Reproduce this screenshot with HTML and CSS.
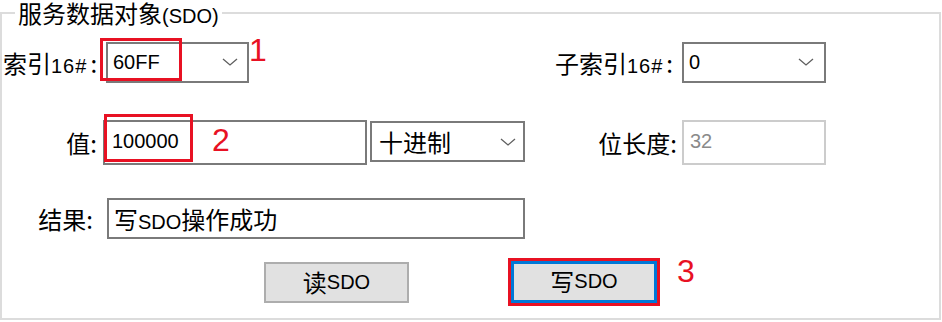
FILE: index.html
```html
<!DOCTYPE html>
<html lang="zh-CN">
<head>
<meta charset="utf-8">
<title>服务数据对象(SDO)</title>
<link rel="stylesheet" href="styles.css">
</head>
<body>
<fieldset class="group">
  <legend class="group-title">服务数据对象<span class="en">(SDO)</span></legend>

  <div class="row row-1">
    <span class="lbl lbl-index">索引<span class="en hex">16#</span><span class="colon">:</span></span>
    <div class="mark-wrap">
      <div class="combo combo-index">
        <span class="en">60FF</span>
        <svg class="chev" viewBox="0 0 16 8" width="16" height="8"><polyline points="1,1 8,7 15,1"/></svg>
      </div>
      <span class="mark mark-1"></span>
    </div>
    <span class="num num-1">1</span>
    <span class="lbl lbl-sub">子索引<span class="en hex">16#</span><span class="colon">:</span></span>
    <div class="combo combo-sub">
      <span class="en">0</span>
      <svg class="chev" viewBox="0 0 16 8" width="16" height="8"><polyline points="1,1 8,7 15,1"/></svg>
    </div>
  </div>

  <div class="row row-2">
    <span class="lbl lbl-val">值:</span>
    <div class="mark-wrap">
      <div class="textbox tb-val"><span class="en">100000</span></div>
      <span class="mark mark-2"></span>
      <span class="num num-2">2</span>
    </div>
    <div class="combo combo-dec">
      <span>十进制</span>
      <svg class="chev" viewBox="0 0 16 8" width="16" height="8"><polyline points="1,1 8,7 15,1"/></svg>
    </div>
    <span class="lbl lbl-bits">位长度:</span>
    <div class="textbox tb-bits disabled"><span class="en">32</span></div>
  </div>

  <div class="row row-3">
    <span class="lbl lbl-res">结果:</span>
    <div class="textbox tb-res"><span>写<span class="en">SDO</span>操作成功</span></div>
  </div>

  <div class="row row-4">
    <button class="btn btn-read" type="button">读<span class="en">SDO</span></button>
    <button class="btn btn-write" type="button">写<span class="en">SDO</span></button>
    <span class="num num-3">3</span>
  </div>
</fieldset>
</body>
</html>
```

FILE: styles.css
```css
* { box-sizing: border-box; }

html, body {
  margin: 0;
  padding: 0;
  background: #ffffff;
}

body {
  width: 942px;
  height: 322px;
  overflow: hidden;
  font-family: "Noto Sans CJK SC", "Liberation Sans", sans-serif;
  font-size: 24px;
  color: #000000;
}

.en {
  font-family: "Liberation Sans", Arial, sans-serif;
  font-size: 20px;
  line-height: 16px;
}

.hex { letter-spacing: 1px; }
.colon { margin-left: 3px; }

.group {
  margin: 0;
  padding: 0 0 15px 0;
  width: 941px;
  border: 2px solid #dcdcdc;
  min-inline-size: 0;
}

.group-title {
  margin-left: 13px;
  padding: 0 3px;
  height: 26px;
  line-height: 26px;
  font-size: 24px;
}

.row {
  display: flex;
  align-items: center;
}

.row-1 { height: 41px; margin-top: 16px; padding-right: 113px; }
.row-2 { height: 45px; margin-top: 37px; padding-right: 113px; }
.row-3 { height: 41px; margin-top: 33px; }
.row-4 { height: 42px; margin-top: 22px; align-items: flex-start; }

.lbl {
  line-height: 26px;
  white-space: nowrap;
}

.lbl-index { width: 104px; padding-left: 1px; }
.lbl-sub { margin-left: auto; padding-right: 9px; }
.lbl-val { width: 101px; text-align: right; padding-right: 6px; }
.lbl-bits { margin-left: auto; padding-right: 5px; }
.lbl-res { width: 105px; text-align: right; padding-right: 14px; }

.mark-wrap {
  position: relative;
  display: flex;
}

.combo {
  display: flex;
  align-items: center;
  justify-content: space-between;
  height: 41px;
  border: 2px solid #7a7a7a;
  background: #ffffff;
  padding: 0 9px 2px 5px;
  line-height: 26px;
}

.combo-index { width: 143px; }
.combo-sub { width: 144px; padding-right: 10px; }
.combo-dec { width: 155px; margin-left: 3px; align-self: flex-start; margin-top: 1px; padding-left: 7px; padding-right: 7px; padding-bottom: 0; }

.chev {
  flex: none;
  fill: none;
  stroke: #5f5f5f;
  stroke-width: 1.3;
}

.textbox {
  display: flex;
  align-items: center;
  border: 2px solid #7a7a7a;
  background: #ffffff;
  padding: 0 6px 2px 7px;
  line-height: 26px;
}

.tb-val { width: 264px; height: 45px; padding-bottom: 4px; }
.tb-bits { width: 144px; height: 45px; padding-left: 6px; padding-bottom: 4px; }
.tb-res { width: 418px; height: 41px; padding-left: 5px; padding-bottom: 0; }

.disabled {
  border-color: #cccccc;
  color: #8a8a8a;
}

.mark {
  position: absolute;
  border: 3px solid #e81123;
  pointer-events: none;
}

.mark-1 { left: -6px; top: -4px; width: 82px; height: 43px; }
.mark-2 { left: 1px; top: -6px; width: 89px; height: 48px; }

.num {
  font-family: "Liberation Sans", Arial, sans-serif;
  font-size: 32px;
  line-height: 32px;
  color: #e81123;
}

.num-1 { align-self: flex-start; margin-top: -8px; }
.num-2 { position: absolute; left: 109px; top: 4px; }
.num-3 { margin-left: 20px; margin-top: -6px; }

.btn {
  display: flex;
  align-items: center;
  justify-content: center;
  height: 41px;
  margin: 0;
  padding: 0 0 2px 0;
  border: 2px solid #adadad;
  background: #e1e1e1;
  color: #000000;
  font-family: "Noto Sans CJK SC", "Liberation Sans", sans-serif;
  font-size: 24px;
  line-height: 26px;
  border-radius: 0;
}

.btn-read { width: 145px; margin-left: 262px; margin-top: 1px; }

.btn-write {
  width: 146px;
  height: 42px;
  margin-left: 102px;
  border: 3px solid #0078d7;
  outline: 3px solid #e81123;
  outline-offset: 0;
}
```
